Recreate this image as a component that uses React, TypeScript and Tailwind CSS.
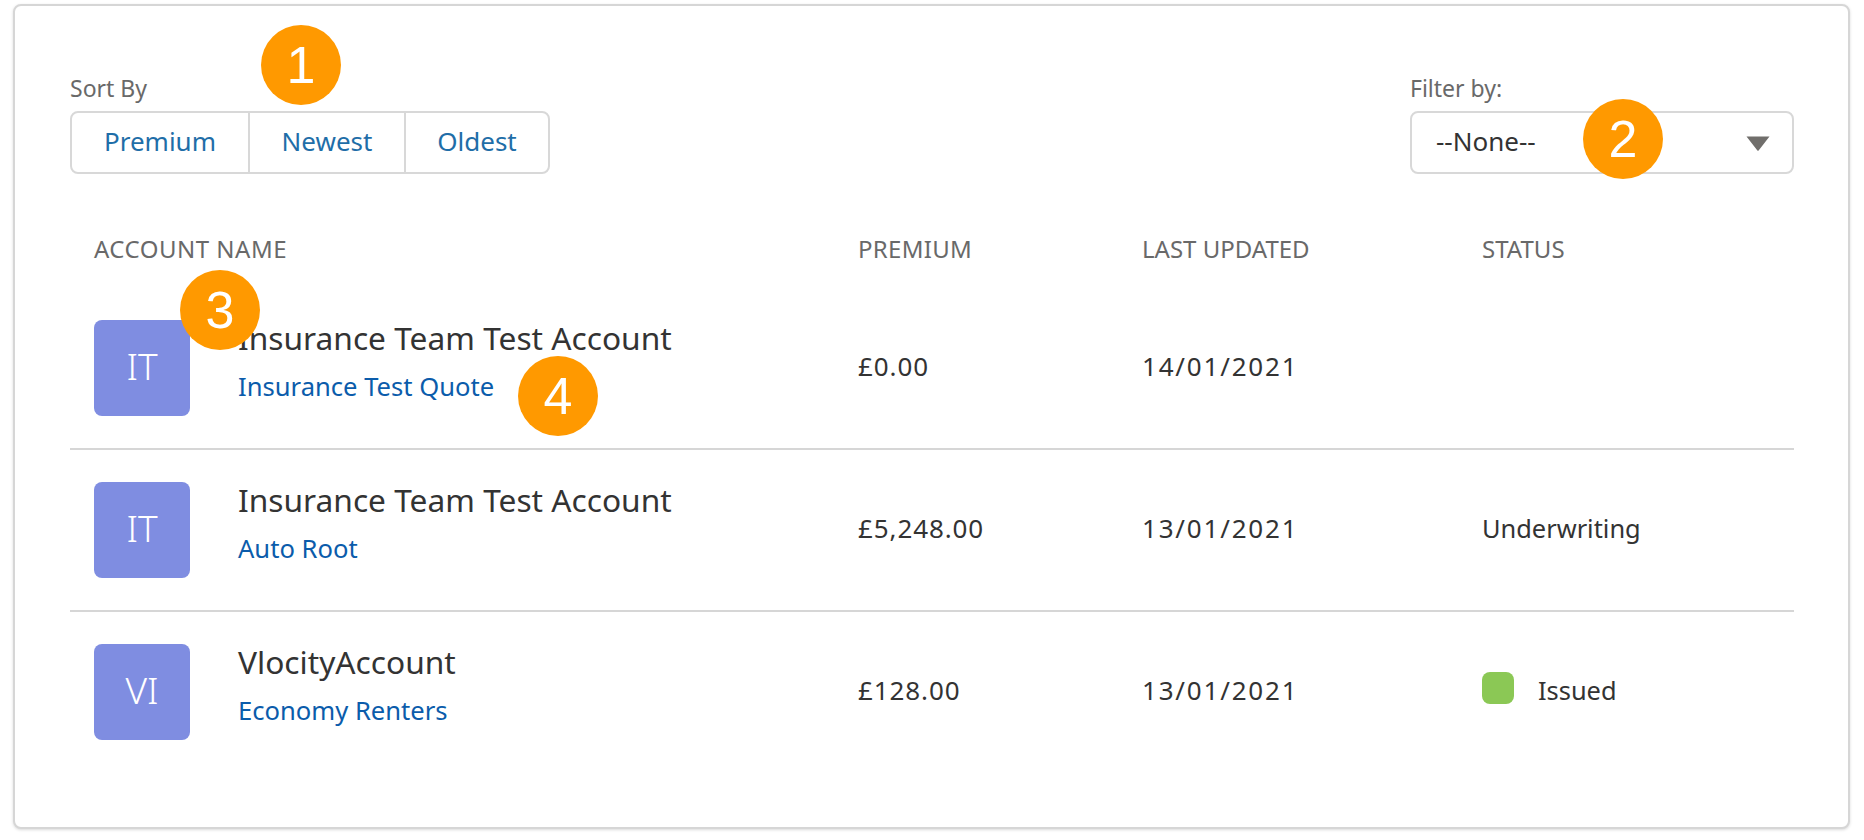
const ROWS = [
  { initials: 'IT', name: 'Insurance Team Test Account', quote: 'Insurance Test Quote', premium: '£0.00', updated: '14/01/2021', status: '', dot: false },
  { initials: 'IT', name: 'Insurance Team Test Account', quote: 'Auto Root', premium: '£5,248.00', updated: '13/01/2021', status: 'Underwriting', dot: false },
  { initials: 'VI', name: 'VlocityAccount', quote: 'Economy Renters', premium: '£128.00', updated: '13/01/2021', status: 'Issued', dot: true },
]

const MARKERS = [
  { n: '1', cls: 'left-[246px] top-[19px]' },
  { n: '2', cls: 'left-[1568px] top-[93px]' },
  { n: '3', cls: 'left-[165px] top-[264px]' },
  { n: '4', cls: 'left-[503px] top-[350px]' },
]

function Marker({ n, cls }: { n: string; cls: string }) {
  return (
    <div className={`absolute ${cls} w-[80px] h-[80px] rounded-full bg-[#ff9900] flex items-center justify-center text-white text-[52px] font-['Liberation_Sans',sans-serif]`}>
      {n}
    </div>
  )
}

export default function App() {
  return (
    <div className="w-[1864px] h-[840px] bg-white pt-[4px] pl-[13px] font-['Noto_Sans',sans-serif] overflow-hidden">
      <div className="relative w-[1837px] h-[825px] rounded-[8px] border-2 border-[#d6d6d6] bg-white pt-[67px] pl-[55px] pr-[54px] shadow-[0_1px_3px_rgba(0,0,0,0.15)]">
        <div className="flex justify-between">
          <div>
            <div className="text-[23px] leading-[30px] text-[#696969] mb-[8px]">Sort By</div>
            <div className="flex h-[63px] w-[480px] rounded-[8px] border-2 border-[#d8d8d8] text-[#1f6ea8] text-[26px]">
              <button className="w-[178px] border-r-2 border-[#d8d8d8] pb-[2px]">Premium</button>
              <button className="w-[156px] border-r-2 border-[#d8d8d8] pb-[2px]">Newest</button>
              <button className="flex-1 pb-[2px]">Oldest</button>
            </div>
          </div>
          <div className="w-[384px]">
            <div className="text-[23px] leading-[30px] text-[#696969] mb-[8px]">Filter by:</div>
            <div className="flex items-center justify-between h-[63px] rounded-[8px] border-2 border-[#d8d8d8] pl-[24px] pr-[22px] pb-[2px] text-[26px] text-[#333333]">
              <span>--None--</span>
              <svg width="24" height="15" viewBox="0 0 24 15" className="mt-[4px]">
                <path d="M0.5 0.5h23L12.8 14.2a1 1 0 0 1-1.6 0z" fill="#706e6b" />
              </svg>
            </div>
          </div>
        </div>

        <div className="grid grid-cols-[764px_284px_340px_1fr] px-[24px] mt-[60px] mb-[24px] text-[24px] leading-[30px] text-[#696969]">
          <div className="tracking-[0.5px]">ACCOUNT NAME</div>
          <div className="tracking-[0.3px]">PREMIUM</div>
          <div>LAST UPDATED</div>
          <div>STATUS</div>
        </div>

        {ROWS.map((r, i) => (
          <div
            key={i}
            className={`grid grid-cols-[764px_284px_340px_1fr] items-center px-[24px] py-[32px] text-[26px] text-[#333333] ${i < 2 ? 'border-b-2 border-[#d6d6d6]' : ''}`}
          >
            <div className="flex items-start">
              <div className="w-[96px] h-[96px] rounded-[8px] bg-[#7f8de1] text-white text-[37px] font-light pb-[4px] flex items-center justify-center">
                {r.initials}
              </div>
              <div className="ml-[48px]">
                <div className="text-[31.7px] leading-[36px]">{r.name}</div>
                <div className="mt-[15px] text-[25.6px] leading-[32px] text-[#0b5cab]">{r.quote}</div>
              </div>
            </div>
            <div className="pb-[4px] tracking-[0.9px]">{r.premium}</div>
            <div className="pb-[4px] tracking-[1.8px]">{r.updated}</div>
            <div className="flex items-center pb-[4px] text-[25.4px]">
              {r.dot && <span className="w-[32px] h-[32px] rounded-[8px] bg-[#8bc855] mr-[24px] mb-[4px]" />}
              {r.status}
            </div>
          </div>
        ))}

        {MARKERS.map(m => (
          <Marker key={m.n} n={m.n} cls={m.cls} />
        ))}
      </div>
    </div>
  )
}
